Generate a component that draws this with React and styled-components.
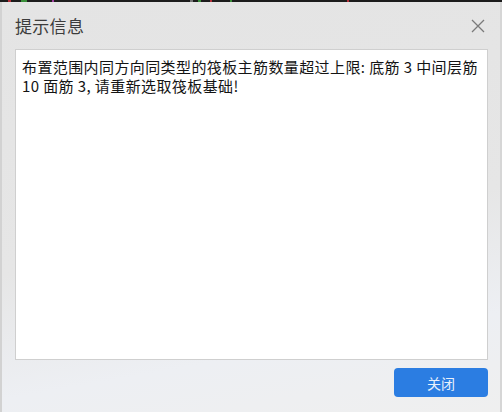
import React from "react";
import styled, { createGlobalStyle } from "styled-components";

const Global = createGlobalStyle`
  html, body { margin: 0; padding: 0; width: 502px; height: 412px; overflow: hidden; background: #e6e6e6; }
  #root { width: 502px; height: 412px; }
`;

const Window = styled.div`
  width: 502px;
  height: 412px;
  box-sizing: border-box;
  display: flex;
  flex-direction: column;
  font-family: "Noto Sans CJK SC", "Noto Sans", sans-serif;
  background: linear-gradient(170deg, #e4e4e4 0%, #e6e6e6 55%, #edeff3 80%, #efefef 100%);
  border-left: 2px solid #d2d2d2;
  border-right: 2px solid #d6d6d6;
`;

const TopStrip = styled.div`
  height: 2px;
  background: #1c1c1c;
  flex: none;
  margin: 0 -2px;
  display: flex;
`;

const Mark = styled.span`
  width: ${p => p.$w}px;
  margin-left: ${p => p.$x}px;
  background: ${p => p.$c};
  height: 100%;
`;

const TitleBar = styled.div`
  height: 49px;
  flex: none;
  display: flex;
  align-items: center;
  justify-content: space-between;
  padding: 0 14px 0 13px;
  box-sizing: border-box;
  margin-top: -2px;
  padding-top: 2px;
`;

const Title = styled.div`
  font-size: 17px;
  color: #3c3c3c;
  letter-spacing: 0.3px;
`;

const Close = styled.button`
  width: 16px;
  height: 16px;
  padding: 0;
  border: none;
  background: none;
  display: flex;
  align-items: center;
  justify-content: center;
`;

const Body = styled.div`
  flex: 1;
  display: flex;
  flex-direction: column;
  padding: 0 12px 0 13px;
`;

const MessageBox = styled.div`
  height: 311px;
  background: #ffffff;
  border: 1px solid #cfcfcf;
  box-sizing: border-box;
  padding: 7px 8px 0 6px;
  font-size: 15px;
  line-height: 19px;
  letter-spacing: 0.4px;
  color: #141414;
`;

const Footer = styled.div`
  display: flex;
  justify-content: flex-end;
  padding-top: 8px;
`;

const Button = styled.button`
  width: 94px;
  height: 29px;
  border: none;
  border-radius: 4px;
  background: #2b7de2;
  color: #e9f0fb;
  font-family: "Noto Sans CJK SC", sans-serif;
  font-size: 14px;
  padding: 0;
`;

export default function App() {
  return (
    <>
      <Global />
      <Window>
        <TopStrip>
          <Mark $x={8} $w={3} $c="#b3303a" />
          <Mark $x={10} $w={6} $c="#3a8f3a" />
          <Mark $x={25} $w={2} $c="#a040a0" />
          <Mark $x={136} $w={3} $c="#777" />
          <Mark $x={5} $w={3} $c="#3a8f3a" />
          <Mark $x={9} $w={2} $c="#b3303a" />
          <Mark $x={18} $w={2} $c="#3a8f3a" />
          <Mark $x={115} $w={2} $c="#b3303a" />
        </TopStrip>
        <TitleBar>
          <Title>提示信息</Title>
          <Close aria-label="关闭">
            <svg width="14" height="14" viewBox="0 0 14 14">
              <path d="M1 1 L13 13 M13 1 L1 13" stroke="#7a7a7a" strokeWidth="1.3" fill="none" />
            </svg>
          </Close>
        </TitleBar>
        <Body>
          <MessageBox>
            布置范围内同方向同类型的筏板主筋数量超过上限: 底筋 3 中间层筋 10 面筋 3, 请重新选取筏板基础!
          </MessageBox>
          <Footer>
            <Button>关闭</Button>
          </Footer>
        </Body>
      </Window>
    </>
  );
}
